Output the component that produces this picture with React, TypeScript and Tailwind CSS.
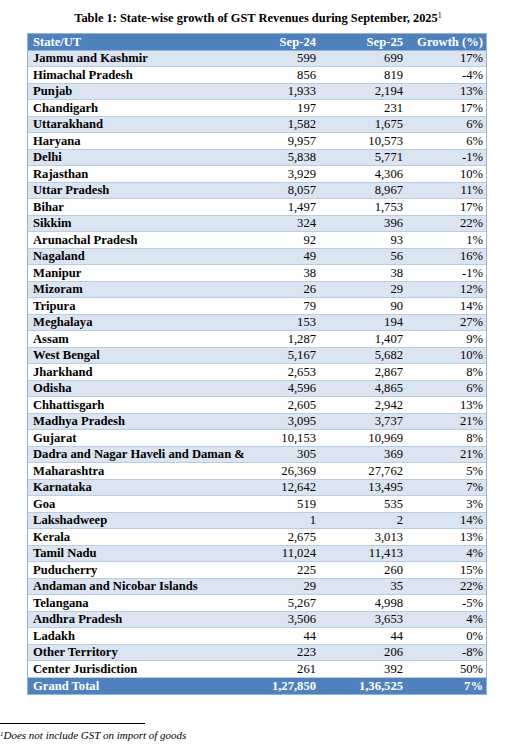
import React from "react";

const rows: [string, string, string, string][] = [
  ["Jammu and Kashmir", "599", "699", "17%"],
  ["Himachal Pradesh", "856", "819", "-4%"],
  ["Punjab", "1,933", "2,194", "13%"],
  ["Chandigarh", "197", "231", "17%"],
  ["Uttarakhand", "1,582", "1,675", "6%"],
  ["Haryana", "9,957", "10,573", "6%"],
  ["Delhi", "5,838", "5,771", "-1%"],
  ["Rajasthan", "3,929", "4,306", "10%"],
  ["Uttar Pradesh", "8,057", "8,967", "11%"],
  ["Bihar", "1,497", "1,753", "17%"],
  ["Sikkim", "324", "396", "22%"],
  ["Arunachal Pradesh", "92", "93", "1%"],
  ["Nagaland", "49", "56", "16%"],
  ["Manipur", "38", "38", "-1%"],
  ["Mizoram", "26", "29", "12%"],
  ["Tripura", "79", "90", "14%"],
  ["Meghalaya", "153", "194", "27%"],
  ["Assam", "1,287", "1,407", "9%"],
  ["West Bengal", "5,167", "5,682", "10%"],
  ["Jharkhand", "2,653", "2,867", "8%"],
  ["Odisha", "4,596", "4,865", "6%"],
  ["Chhattisgarh", "2,605", "2,942", "13%"],
  ["Madhya Pradesh", "3,095", "3,737", "21%"],
  ["Gujarat", "10,153", "10,969", "8%"],
  ["Dadra and Nagar Haveli and Daman & Diu", "305", "369", "21%"],
  ["Maharashtra", "26,369", "27,762", "5%"],
  ["Karnataka", "12,642", "13,495", "7%"],
  ["Goa", "519", "535", "3%"],
  ["Lakshadweep", "1", "2", "14%"],
  ["Kerala", "2,675", "3,013", "13%"],
  ["Tamil Nadu", "11,024", "11,413", "4%"],
  ["Puducherry", "225", "260", "15%"],
  ["Andaman and Nicobar Islands", "29", "35", "22%"],
  ["Telangana", "5,267", "4,998", "-5%"],
  ["Andhra Pradesh", "3,506", "3,653", "4%"],
  ["Ladakh", "44", "44", "0%"],
  ["Other Territory", "223", "206", "-8%"],
  ["Center Jurisdiction", "261", "392", "50%"],
];

const grid = "grid grid-cols-[216px_77px_87px_80px] h-[16.5px] items-end leading-[15px]";

export default function App() {
  return (
    <div className="w-[516px] h-[750px] bg-white text-black overflow-hidden font-['Liberation_Serif','Times_New_Roman',serif]">
      <div className="pt-[10px] text-center text-[12.4px] font-bold leading-[16px]">
        Table 1: State-wise growth of GST Revenues during September, 2025
        <sup className="text-[8px] font-normal">1</sup>
      </div>
      <div className="ml-[27px] mt-[7px] w-[460px] border border-[#95b3d7]">
        <div className={`${grid} bg-[#4f81bd] text-white font-bold text-[12.6px] border-b border-[#95b3d7]`}>
          <div className="pl-[5px]">State/UT</div>
          <div className="text-right pr-[5px]">Sep-24</div>
          <div className="text-right pr-[5px]">Sep-25</div>
          <div className="text-right pr-[5px]">Growth (%)</div>
        </div>
        {rows.map((r, i) => (
          <div
            key={r[0]}
            className={`${grid} text-[12.6px] border-b border-[#b8cce4] ${i % 2 === 0 ? "bg-[#dbe5f1]" : "bg-white"}`}
          >
            <div className="pl-[5px] font-bold whitespace-nowrap overflow-hidden">{r[0]}</div>
            <div className="text-right pr-[5px]">{r[1]}</div>
            <div className="text-right pr-[5px]">{r[2]}</div>
            <div className="text-right pr-[5px]">{r[3]}</div>
          </div>
        ))}
        <div className={`${grid} bg-[#4f81bd] text-white font-bold text-[12.6px]`}>
          <div className="pl-[5px]">Grand Total</div>
          <div className="text-right pr-[5px]">1,27,850</div>
          <div className="text-right pr-[5px]">1,36,525</div>
          <div className="text-right pr-[5px]">7%</div>
        </div>
      </div>
      <div className="mt-[28px] w-[145px] h-px bg-black" />
      <div className="pt-[4px] text-[11px] italic leading-[14px]">
        <sup className="text-[7px]">1</sup>Does not include GST on import of goods
      </div>
    </div>
  );
}
